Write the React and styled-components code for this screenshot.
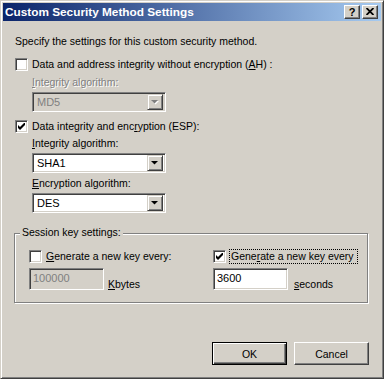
import React from 'react';
import styled, { createGlobalStyle, css } from 'styled-components';

const Global = createGlobalStyle`
  html, body { margin: 0; padding: 0; background: #D4D0C8; }
  body {
    font-family: "Liberation Sans", Arial, sans-serif;
    font-size: 10.5px;
    color: #000;
  }
`;

const Window = styled.div`
  box-sizing: border-box;
  width: 384px;
  height: 379px;
  background: #D4D0C8;
  border: 1px solid;
  border-color: #D4D0C8 #404040 #404040 #D4D0C8;
  box-shadow: inset 1px 1px #fff, inset -1px -1px #808080;
  padding: 2px;
  display: flex;
  flex-direction: column;
`;

const TitleBar = styled.div`
  height: 18px;
  flex: none;
  display: flex;
  align-items: center;
  justify-content: space-between;
  padding: 0 3px 0 2px;
  background: linear-gradient(to right, #0A246A, #A6CAF0);
`;

const TitleText = styled.span`
  color: #fff;
  font-weight: bold;
  font-size: 11.8px;
  line-height: 18px;
  white-space: nowrap;
`;

const CaptionButtons = styled.div`
  display: flex;
  gap: 2px;
`;

const CaptionButton = styled.div`
  box-sizing: border-box;
  width: 16px;
  height: 14px;
  background: #D4D0C8;
  border: 1px solid;
  border-color: #fff #404040 #404040 #fff;
  box-shadow: inset -1px -1px #808080;
  display: flex;
  align-items: center;
  justify-content: center;
  font-weight: bold;
  font-size: 11px;
  line-height: 12px;
  padding-bottom: 1px;
`;

const Client = styled.div`
  flex: 1;
  display: flex;
  flex-direction: column;
  padding: 0 0 0 12px;
`;

const Intro = styled.div`
  margin-top: 14px;
  line-height: 13px;
  white-space: nowrap;
`;

const CheckRow = styled.div`
  display: flex;
  align-items: center;
  gap: 4px;
  height: 13px;
  margin-top: ${(p) => p.$mt || 0}px;
  white-space: nowrap;
`;

const Box = styled.div`
  box-sizing: border-box;
  width: 13px;
  height: 13px;
  flex: none;
  background: #fff;
  border: 1px solid;
  border-color: #808080 #fff #fff #808080;
  box-shadow: inset 1px 1px #404040, inset -1px -1px #D4D0C8;
  display: flex;
  align-items: center;
  justify-content: center;
`;

const CheckLabel = styled.span`
  line-height: 13px;
  ${(p) =>
    p.$focus &&
    css`
      outline: 1px dotted #000;
      outline-offset: 0;
      padding: 0 1px;
      width: 125px;
      overflow: hidden;
      display: inline-block;
    `}
`;

const Indent = styled.div`
  margin-left: 17px;
  display: flex;
  flex-direction: column;
`;

const FieldLabel = styled.div`
  line-height: 13px;
  margin-top: ${(p) => p.$mt || 0}px;
  color: ${(p) => (p.$disabled ? '#808080' : '#000')};
  text-shadow: ${(p) => (p.$disabled ? '1px 1px #fff' : 'none')};
`;

const U = styled.span`
  text-decoration: underline;
  text-underline-offset: 1px;
`;

const sunken = css`
  box-sizing: border-box;
  border: 1px solid;
  border-color: #808080 #fff #fff #808080;
  box-shadow: inset 1px 1px #404040, inset -1px -1px #D4D0C8;
`;

const Combo = styled.div`
  ${sunken};
  width: 134px;
  height: 20px;
  margin-top: ${(p) => p.$mt || 0}px;
  padding: 2px;
  display: flex;
  align-items: center;
  background: ${(p) => (p.$disabled ? '#D4D0C8' : '#fff')};
  color: ${(p) => (p.$disabled ? '#808080' : '#000')};
`;

const ComboValue = styled.span`
  flex: 1;
  padding-left: 2px;
  line-height: 16px;
  font-size: 11px;
`;

const DropButton = styled.div`
  box-sizing: border-box;
  width: 16px;
  height: 16px;
  flex: none;
  background: #D4D0C8;
  border: 1px solid;
  border-color: #D4D0C8 #404040 #404040 #D4D0C8;
  box-shadow: inset 1px 1px #fff, inset -1px -1px #808080;
  display: flex;
  align-items: center;
  justify-content: center;
`;

const GroupBox = styled.div`
  position: relative;
  box-sizing: border-box;
  width: 354px;
  height: 70px;
  margin: 20px 0 0 -1px;
  border: 1px solid #808080;
  box-shadow: 1px 1px 0 #fff, inset 1px 1px 0 #fff;
  padding: 16px 0 0 14px;
  display: grid;
  grid-template-columns: 184px 1fr;
`;

const Legend = styled.span`
  position: absolute;
  top: -8px;
  left: 5px;
  padding: 0 2px;
  background: #D4D0C8;
  line-height: 13px;
  white-space: nowrap;
`;

const KeyColumn = styled.div`
  display: flex;
  flex-direction: column;
`;

const InputRow = styled.div`
  display: flex;
  align-items: flex-end;
  gap: ${(p) => p.$gap}px;
  margin-top: 5px;
`;

const TextBox = styled.div`
  ${sunken};
  width: 75px;
  height: 22px;
  padding: 3px 0 0 3px;
  line-height: 13px;
  font-size: 11px;
  background: ${(p) => (p.$disabled ? '#D4D0C8' : '#fff')};
  color: ${(p) => (p.$disabled ? '#808080' : '#000')};
`;

const Unit = styled.span`
  line-height: 13px;
  margin-bottom: -1px;
`;

const ButtonRow = styled.div`
  display: flex;
  justify-content: flex-end;
  gap: 7px;
  margin-top: 39px;
  padding-right: 12px;
`;

const Button = styled.div`
  box-sizing: border-box;
  width: 75px;
  height: 23px;
  display: flex;
  align-items: center;
  justify-content: center;
  background: #D4D0C8;
  border: 1px solid;
  ${(p) =>
    p.$default
      ? css`
          border-color: #000;
          box-shadow: inset 1px 1px #fff, inset -1px -1px #404040,
            inset -2px -2px #808080;
        `
      : css`
          border-color: #fff #404040 #404040 #fff;
          box-shadow: inset -1px -1px #808080;
        `}
`;

const Check = () => (
  <svg width="7" height="7" viewBox="0 0 7 7">
    <polygon points="0,2 2,4 7,-1 7,2 2,7 0,5" fill="#000" />
  </svg>
);

const Arrow = ({ disabled }) => (
  <svg width="8" height="5" viewBox="0 0 8 5">
    {disabled && <polygon points="1,1 8,1 4.5,4.5" fill="#fff" />}
    <polygon points="0,0 7,0 3.5,3.5" fill={disabled ? '#808080' : '#000'} />
  </svg>
);

const CloseGlyph = () => (
  <svg width="8" height="7" viewBox="0 0 8 7">
    <path d="M0.5 0 L7.5 7 M7.5 0 L0.5 7" stroke="#000" strokeWidth="1.8" />
  </svg>
);

const Checkbox = ({ checked }) => <Box>{checked && <Check />}</Box>;

const ComboBox = ({ value, disabled, mt }) => (
  <Combo $disabled={disabled} $mt={mt}>
    <ComboValue>{value}</ComboValue>
    <DropButton>
      <Arrow disabled={disabled} />
    </DropButton>
  </Combo>
);

export default function App() {
  return (
    <>
      <Global />
      <Window>
        <TitleBar>
          <TitleText>Custom Security Method Settings</TitleText>
          <CaptionButtons>
            <CaptionButton>?</CaptionButton>
            <CaptionButton>
              <CloseGlyph />
            </CaptionButton>
          </CaptionButtons>
        </TitleBar>
        <Client>
          <Intro>Specify the settings for this custom security method.</Intro>
          <CheckRow $mt={10}>
            <Checkbox />
            <CheckLabel>
              Data and address integrity without encryption (<U>A</U>H) :
            </CheckLabel>
          </CheckRow>
          <Indent>
            <FieldLabel $disabled $mt={5}>
              <U>I</U>ntegrity algorithm:
            </FieldLabel>
            <ComboBox value="MD5" disabled mt={3} />
          </Indent>
          <CheckRow $mt={8}>
            <Checkbox checked />
            <CheckLabel>
              Data integrity and enc<U>r</U>yption (ESP):
            </CheckLabel>
          </CheckRow>
          <Indent>
            <FieldLabel $mt={4}>
              <U>I</U>ntegrity algorithm:
            </FieldLabel>
            <ComboBox value="SHA1" mt={3} />
            <FieldLabel $mt={4}>
              <U>E</U>ncryption algorithm:
            </FieldLabel>
            <ComboBox value="DES" mt={3} />
          </Indent>
          <GroupBox>
            <Legend>Session key settings:</Legend>
            <KeyColumn>
              <CheckRow>
                <Checkbox />
                <CheckLabel>
                  <U>G</U>enerate a new key every:
                </CheckLabel>
              </CheckRow>
              <InputRow $gap={4}>
                <TextBox $disabled>100000</TextBox>
                <Unit>
                  <U>K</U>bytes
                </Unit>
              </InputRow>
            </KeyColumn>
            <KeyColumn>
              <CheckRow>
                <Checkbox checked />
                <CheckLabel $focus>
                  Gene<U>r</U>ate a new key every
                </CheckLabel>
              </CheckRow>
              <InputRow $gap={6}>
                <TextBox>3600</TextBox>
                <Unit>
                  <U>s</U>econds
                </Unit>
              </InputRow>
            </KeyColumn>
          </GroupBox>
          <ButtonRow>
            <Button $default>OK</Button>
            <Button>Cancel</Button>
          </ButtonRow>
        </Client>
      </Window>
    </>
  );
}
